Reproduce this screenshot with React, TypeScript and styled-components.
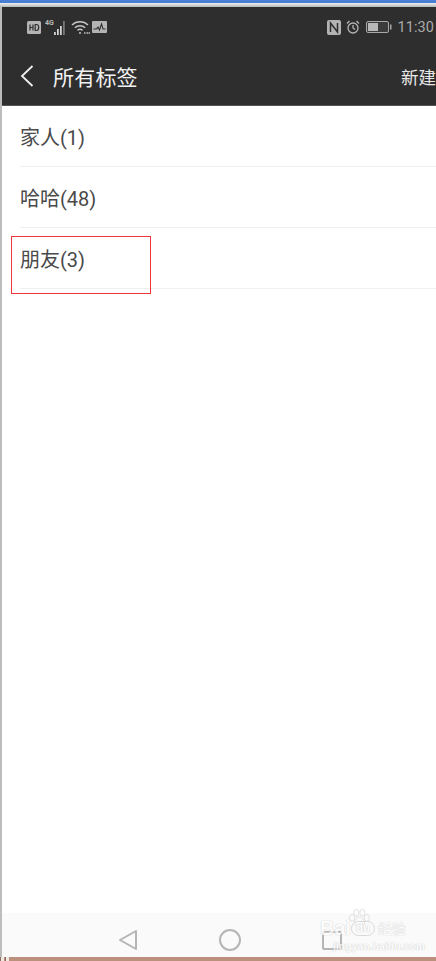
import React from 'react';
import styled, { createGlobalStyle } from 'styled-components';

const GlobalStyle = createGlobalStyle`
  html, body {
    margin: 0;
    padding: 0;
    background: #fff;
  }
  * {
    box-sizing: border-box;
  }
`;

const Page = styled.div`
  position: relative;
  width: 436px;
  height: 961px;
  overflow: hidden;
  display: flex;
  flex-direction: column;
  background: #bdbdbd;
  font-family: Roboto, "Noto Sans CJK SC", sans-serif;
`;

const WindowEdge = styled.div`
  height: 3px;
  background: #4a7fd6;
  flex: none;
`;

const WindowShade = styled.div`
  height: 4px;
  background: linear-gradient(#f0f0f0, #b8b8b8);
  flex: none;
`;

const Body = styled.div`
  flex: 1;
  display: flex;
  flex-direction: column;
  margin-left: 2px;
  min-height: 0;
  background: #fff;
`;

const Header = styled.header`
  height: 99px;
  flex: none;
  background: #2e2e2e;
  display: flex;
  flex-direction: column;
  border-bottom: 1px solid #555;
`;

const StatusBar = styled.div`
  height: 40px;
  padding: 0 2px 0 25px;
  display: flex;
  align-items: center;
  justify-content: space-between;
  color: #b4b4b4;
`;

const StatusGroup = styled.div`
  display: flex;
  align-items: center;
  gap: 4px;
`;

const Clock = styled.span`
  font-size: 14.5px;
  letter-spacing: 0.1px;
  color: #aaa;
`;

const TitleBar = styled.div`
  flex: 1;
  display: flex;
  align-items: center;
  padding: 0 0 0 18px;
`;

const BackButton = styled.div`
  width: 33px;
  display: flex;
  align-items: center;
`;

const Title = styled.h1`
  margin: 0;
  flex: 1;
  font-size: 21px;
  letter-spacing: 0.2px;
  font-weight: 400;
  color: #f2f2f2;
  font-family: "Noto Sans CJK SC", sans-serif;
`;

const NewAction = styled.span`
  width: 35px;
  font-size: 17.5px;
  color: #e8e8e8;
  white-space: nowrap;
  font-family: "Noto Sans CJK SC", sans-serif;
`;

const TagList = styled.ul`
  list-style: none;
  margin: 0;
  padding: 0 0 0 18px;
  flex: 1;
`;

const TagRow = styled.li`
  height: 61px;
  display: flex;
  align-items: center;
  font-size: 20px;
  color: #4a4a4a;
  border-bottom: 1px solid #efefef;
`;

const NavBar = styled.nav`
  height: 44px;
  flex: none;
  background: #fafafa;
  display: grid;
  grid-template-columns: repeat(3, 102px);
  align-items: center;
  padding: 10px 0 0 75px;
`;

const NavSlot = styled.div`
  display: flex;
  justify-content: center;
`;

const BottomEdge = styled.div`
  height: 4px;
  flex: none;
  background: #bb907c;
`;

const CornerMarks = styled.div`
  position: absolute;
  left: 0;
  bottom: 0;
  display: flex;
  gap: 1px;
`;

const CornerMark = styled.span`
  width: 4px;
  height: 4px;
  background: #f4e9e2;
  border-left: 1px solid #8a6f60;
`;

const Highlight = styled.div`
  position: absolute;
  left: 11px;
  top: 236px;
  width: 140px;
  height: 58px;
  border: 1px solid #f0353b;
`;

const Watermark = styled.div`
  position: absolute;
  left: 318px;
  top: 905px;
  width: 118px;
  height: 46px;
  color: #fdfdfd;
  text-shadow: 0 0 1px #c4c4c4, 0 0 1px #c4c4c4;
  opacity: 0.75;
`;

const WatermarkBrand = styled.div`
  position: absolute;
  left: 2px;
  top: 12px;
  font-size: 20px;
  font-weight: 700;
  white-space: nowrap;
  font-family: "Liberation Sans", sans-serif;
`;

const WatermarkDu = styled.span`
  position: absolute;
  left: 33px;
  top: 16px;
  width: 24px;
  height: 15px;
  border: 1px solid #cfcfcf;
  border-radius: 8px;
  font-size: 12px;
  line-height: 13px;
  font-weight: 700;
  text-align: center;
  font-family: "Liberation Sans", sans-serif;
`;

const WatermarkLabel = styled.span`
  position: absolute;
  left: 60px;
  top: 13px;
  font-size: 14px;
  white-space: nowrap;
  font-family: "Noto Sans CJK SC", sans-serif;
`;

const WatermarkUrl = styled.div`
  position: absolute;
  left: 15px;
  top: 35px;
  font-size: 10.5px;
  font-weight: 700;
  white-space: nowrap;
  font-family: "Liberation Sans", sans-serif;
`;

const WatermarkPaw = styled.svg`
  position: absolute;
  left: 29px;
  top: 2px;
`;

const HdBadge = () => (
  <svg width="14" height="13" viewBox="0 0 14 13">
    <rect width="14" height="13" rx="1.5" fill="#b4b4b4" />
    <path d="M3 3.500v6M6 3.500v6M3 6.500h3M8.200 3.500v6h1.300c1.500 0 2.200-1.200 2.200-3s-.7-3-2.200-3z" stroke="#2e2e2e" strokeWidth="1.200" fill="none" />
  </svg>
);

const Signal = () => (
  <svg width="21" height="17" viewBox="0 0 21 17">
    <text x="0" y="6" fontSize="7" fontWeight="700" fill="#bbb" fontFamily="Roboto, sans-serif">4G</text>
    <rect x="9" y="13" width="1.800" height="3" fill="#d0d0d0" />
    <rect x="12" y="10" width="1.800" height="6" fill="#d0d0d0" />
    <rect x="15" y="7" width="1.800" height="9" fill="#d0d0d0" />
    <rect x="18" y="2" width="1.800" height="14" fill="#777" />
  </svg>
);

const Wifi = () => (
  <svg width="19" height="15" viewBox="0 0 19 15" fill="none" stroke="#c4c4c4" strokeWidth="1.400" style={{ marginLeft: 1 }}>
    <path d="M1 5c4.400-4.300 11.600-4.300 16 0" />
    <path d="M3.800 7.800c2.900-2.700 7.500-2.700 10.400 0" />
    <path d="M6.500 10.400c1.500-1.300 3.500-1.300 5 0" />
    <circle cx="9" cy="13" r="1" fill="#c4c4c4" stroke="none" />
    <path d="M13 13h1.500M15.500 13H17M17.500 13H19" strokeWidth="1.800" stroke="#999" />
  </svg>
);

const Activity = () => (
  <svg width="15" height="12" viewBox="0 0 15 12" style={{ marginLeft: -2 }}>
    <rect width="15" height="12" rx="1" fill="#b4b4b4" />
    <path d="M1.500 8h3l1.500-2 1.500 3 2-6 1.500 5h2.500" stroke="#2e2e2e" strokeWidth="1.100" fill="none" />
  </svg>
);

const Nfc = () => (
  <svg width="14" height="15" viewBox="0 0 14 15" style={{ marginRight: 1 }}>
    <rect width="14" height="15" rx="2" fill="#b4b4b4" />
    <path d="M3.500 12V3l7 9V3" stroke="#2e2e2e" strokeWidth="1.500" fill="none" />
  </svg>
);

const Alarm = () => (
  <svg width="14" height="14" viewBox="0 0 14 14" fill="none" stroke="#b4b4b4" strokeWidth="1.300" style={{ marginRight: 2 }}>
    <circle cx="7" cy="8" r="5" />
    <path d="M7 5v3l2 1.500M1 3.500 3.500 1M13 3.500 10.500 1" />
  </svg>
);

const Battery = () => (
  <svg width="26" height="12" viewBox="0 0 26 12" style={{ marginRight: 1 }}>
    <rect x=".5" y=".5" width="22" height="11" rx="1.500" fill="#3c3c3c" stroke="#a8a8a8" />
    <rect x="2" y="2" width="10" height="8" fill="#b8b8b8" />
    <rect x="24" y="3.500" width="1.500" height="5" fill="#a8a8a8" />
  </svg>
);

const tags = ['家人(1)', '哈哈(48)', '朋友(3)'];

export default function App() {
  return (
    <Page>
      <GlobalStyle />
      <WindowEdge />
      <WindowShade />
      <Body>
        <Header>
          <StatusBar>
            <StatusGroup>
              <HdBadge />
              <Signal />
              <Wifi />
              <Activity />
            </StatusGroup>
            <StatusGroup>
              <Nfc />
              <Alarm />
              <Battery />
              <Clock>11:30</Clock>
            </StatusGroup>
          </StatusBar>
          <TitleBar>
            <BackButton>
              <svg width="14" height="22" viewBox="0 0 14 22" fill="none" stroke="#f0f0f0" strokeWidth="1.800">
                <path d="M12.500 1 2 11l10.500 10" />
              </svg>
            </BackButton>
            <Title>所有标签</Title>
            <NewAction>新建</NewAction>
          </TitleBar>
        </Header>
        <TagList>
          {tags.map((tag) => (
            <TagRow key={tag}>{tag}</TagRow>
          ))}
        </TagList>
        <NavBar>
          <NavSlot>
            <svg width="20" height="22" viewBox="0 0 20 22" fill="none" stroke="#b5b5b5" strokeWidth="2" strokeLinejoin="round">
              <path d="M18 2v18L2 11z" />
            </svg>
          </NavSlot>
          <NavSlot>
            <svg width="22" height="22" viewBox="0 0 22 22" fill="none" stroke="#b5b5b5" strokeWidth="2">
              <circle cx="11" cy="11" r="10" />
            </svg>
          </NavSlot>
          <NavSlot>
            <svg width="20" height="19" viewBox="0 0 20 19" fill="none" stroke="#b5b5b5" strokeWidth="2">
              <rect x="1" y="1" width="18" height="17" rx="1" />
            </svg>
          </NavSlot>
        </NavBar>
      </Body>
      <BottomEdge />
      <CornerMarks>
        <CornerMark />
        <CornerMark />
      </CornerMarks>
      <Highlight />
      <Watermark>
        <WatermarkPaw width="24" height="20" viewBox="0 0 28 22" fill="#fbfbfb" stroke="#cfcfcf" strokeWidth=".9">
          <ellipse cx="6" cy="12" rx="3" ry="4" />
          <ellipse cx="11" cy="6" rx="3" ry="4" />
          <ellipse cx="18" cy="6" rx="3" ry="4" />
          <ellipse cx="23" cy="12" rx="3" ry="4" />
          <path d="M14.500 11c-3 0-6 4-6 7s3 3 6 2 6 1 6-2-3-7-6-7z" />
        </WatermarkPaw>
        <WatermarkBrand>Bai</WatermarkBrand>
        <WatermarkDu>du</WatermarkDu>
        <WatermarkLabel>经验</WatermarkLabel>
        <WatermarkUrl>jingyan.baidu.com</WatermarkUrl>
      </Watermark>
    </Page>
  );
}
